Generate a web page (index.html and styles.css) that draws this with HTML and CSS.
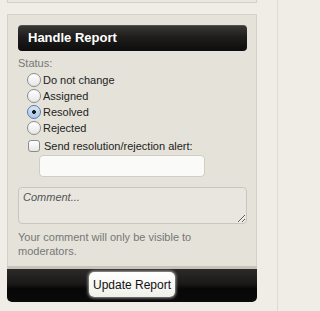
FILE: index.html
```html
<!DOCTYPE html>
<html>
<head>
<meta charset="utf-8">
<link rel="stylesheet" href="styles.css">
</head>
<body>
<div class="page">
  <div class="topbox"></div>
  <form class="panel">
    <div class="panel-body">
      <h3 class="header">Handle Report</h3>
      <div class="status-label">Status:</div>
      <ul class="options">
        <li><label><input type="radio" name="s"> Do not change</label></li>
        <li><label><input type="radio" name="s"> Assigned</label></li>
        <li><label><input type="radio" name="s" checked> Resolved</label></li>
        <li><label><input type="radio" name="s"> Rejected</label></li>
        <li class="check"><label><input type="checkbox"> Send resolution/rejection alert:</label></li>
      </ul>
      <input class="alert-input" type="text">
      <textarea class="comment" placeholder="Comment..."></textarea>
      <p class="help">Your comment will only be visible to moderators.</p>
    </div>
    <div class="footer">
      <button type="button" class="btn">Update Report</button>
    </div>
  </form>
</div>
</body>
</html>
```
FILE: styles.css
```css
html, body {
  margin: 0;
  padding: 0;
  background: #efede5;
}
body {
  font-family: "Liberation Sans", Arial, sans-serif;
  font-size: 11px;
  color: #222;
}
.page {
  width: 278px;
  height: 311px;
  border-right: 1px solid #dcdad1;
  box-sizing: border-box;
  padding-left: 7px;
}
.topbox {
  width: 250px;
  height: 3px;
  box-sizing: border-box;
  background: #e9e7de;
  border: 1px solid #d4d2c8;
  border-top: none;
}
.panel {
  margin: 11px 0 0 0;
  width: 250px;
  box-sizing: border-box;
  display: flex;
  flex-direction: column;
}
.panel-body {
  background: #e4e2d9;
  border: 1px solid #d4d2c8;
  border-bottom: none;
  padding: 10px 9px 0 10px;
  display: flex;
  flex-direction: column;
}
.header {
  margin: 0;
  height: 26px;
  line-height: 26px;
  border-radius: 4px;
  background: linear-gradient(#3b3937 0%, #1f1e1d 45%, #0d0c0c 100%);
  box-shadow: inset 0 1px 0 rgba(255,255,255,0.12);
  color: #fff;
  font-size: 13px;
  font-weight: bold;
  padding-left: 10px;
}
.status-label {
  margin-top: 5px;
  line-height: 14px;
  color: #777;
}
.options {
  list-style: none;
  margin: 2px 0 0 0;
  padding: 0 0 0 9px;
}
.options li {
  height: 16px;
  line-height: 16px;
}
.options label {
  display: flex;
  align-items: center;
  gap: 2px;
}
.options li.check {
  margin-top: 2px;
}
input[type=radio] {
  appearance: none;
  -webkit-appearance: none;
  margin: 0;
  width: 14px;
  height: 14px;
  border-radius: 50%;
  border: 1px solid #8c8c8c;
  background: linear-gradient(#ffffff, #e6e6e6);
  box-sizing: border-box;
}
input[type=radio]:checked {
  border-color: #5a79a6;
  background: radial-gradient(circle, #1b1b1b 0, #1b1b1b 1.6px, transparent 2.2px), linear-gradient(#d6e6f8, #a9c6e8);
}
input[type=checkbox] {
  appearance: none;
  -webkit-appearance: none;
  margin: 0 2px 0 1px;
  width: 12px;
  height: 12px;
  border-radius: 3px;
  border: 1px solid #8c8c8c;
  background: linear-gradient(#ffffff, #e6e6e6);
  box-sizing: border-box;
}
.alert-input {
  margin: 1px 0 0 21px;
  width: 166px;
  height: 22px;
  box-sizing: border-box;
  border: 1px solid #cfcdc4;
  border-radius: 4px;
  background: #fafaf8;
}
.comment {
  margin: 10px 0 0 0;
  height: 37px;
  box-sizing: border-box;
  border: 1px solid #c9c7bd;
  border-radius: 4px;
  background: #e8e6de;
  font-family: "Liberation Sans", Arial, sans-serif;
  font-size: 11px;
  padding: 3px 4px;
  resize: vertical;
}
.comment::placeholder {
  color: #555;
  font-style: italic;
}
.help {
  margin: 6px 0 0 0;
  line-height: 14px;
  color: #777;
  padding-right: 40px;
  padding-bottom: 8px;
}
.footer {
  height: 36px;
  box-sizing: border-box;
  border-top: 3px solid #cbc1bb;
  border-radius: 0 0 5px 5px;
  background: linear-gradient(#2c2b29 0%, #1a1918 45%, #070707 60%, #0a0a0a 100%);
  display: flex;
  justify-content: center;
  align-items: center;
  padding-bottom: 2px;
}
.btn {
  width: 86px;
  height: 25px;
  border: none;
  border-radius: 5px;
  background: linear-gradient(#ffffff, #f0f0ea);
  box-shadow: 0 0 3px 1px rgba(255,255,255,0.6);
  font-family: "Liberation Sans", Arial, sans-serif;
  font-size: 12px;
  color: #111;
  padding: 0;
}
```
